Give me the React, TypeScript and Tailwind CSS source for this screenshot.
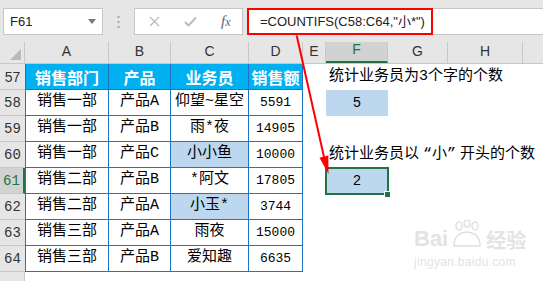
import React from 'react';

// Excel-ish sheet with COUNTIFS example
const tableRows = [
  { n: 58, a: '销售一部', b: '产品A', c: '仰望~星空', d: '5591' },
  { n: 59, a: '销售一部', b: '产品B', c: '雨*夜', d: '14905' },
  { n: 60, a: '销售一部', b: '产品C', c: '小小鱼', d: '10000', hl: true },
  { n: 61, a: '销售二部', b: '产品B', c: '*阿文', d: '17805' },
  { n: 62, a: '销售二部', b: '产品A', c: '小玉*', d: '3744', hl: true },
  { n: 63, a: '销售三部', b: '产品A', c: '雨夜', d: '15000' },
  { n: 64, a: '销售三部', b: '产品B', c: '爱知趣', d: '6635' },
];

const cellFont = "font-['Liberation_Mono','Noto_Sans_CJK_SC',monospace]";

const RowHead = ({ n, active, edge }: { n?: number; active?: boolean; edge?: boolean }) => (
  <div
    className={`w-[25px] h-full flex items-end justify-center pb-[1px] text-[14px] border-b border-[#c8c8c8] ${
      active ? 'bg-[#d2d2d2] text-[#217346] border-r-2 border-r-[#217346]' : 'bg-[#e6e6e6] text-[#333]'
    } ${edge ? 'border-r border-r-[#c8c8c8]' : ''}`}
  >
    {n}
  </div>
);

const Cell = ({
  w,
  first,
  hl,
  children,
  className = '',
}: {
  w: string;
  first?: boolean;
  hl?: boolean;
  children?: React.ReactNode;
  className?: string;
}) => (
  <div
    className={`${w} h-full flex items-center justify-center border-r border-b border-[#1f74c4] ${
      first ? 'border-l' : ''
    } ${hl ? 'bg-[#bdd7ee]' : 'bg-white'} ${className}`}
  >
    {children}
  </div>
);

const ColHead = ({ w, label, active }: { w: string; label: string; active?: boolean }) => (
  <div
    className={`${w} h-full flex items-end justify-center pb-[1px] border-r border-[#c8c8c8] ${
      active ? 'bg-[#d2d2d2] text-[#217346] border-b-2 border-b-[#217346]' : 'text-[#333]'
    }`}
  >
    {label}
  </div>
);

export default function App() {
  return (
    <div className="relative w-[543px] h-[281px] overflow-hidden bg-white font-['Liberation_Sans','Noto_Sans_CJK_SC',sans-serif]">
      {/* formula bar */}
      <div className="h-[42px] bg-[#e6e6e6] flex items-start pt-[8px]">
        <div className="ml-[3px] w-[100px] h-[27px] bg-white border border-[#c6c6c6] flex items-center justify-between pl-[6px] pr-[6px] text-[13px] text-[#222]">
          <span>F61</span>
          <svg width="8" height="5" viewBox="0 0 8 5">
            <polygon points="0,0 8,0 4,5" fill="#777" />
          </svg>
        </div>
        <div className="w-[31px] h-[27px] flex items-center justify-center">
          <svg width="3" height="12" viewBox="0 0 3 12">
            <rect x="0.5" y="0" width="2" height="2" fill="#a8a8a8" />
            <rect x="0.5" y="5" width="2" height="2" fill="#a8a8a8" />
            <rect x="0.5" y="10" width="2" height="2" fill="#a8a8a8" />
          </svg>
        </div>
        <div className="w-[109px] h-[27px] bg-white border border-[#c6c6c6] flex items-center pl-[14px] gap-[24px]">
          <svg width="11" height="11" viewBox="0 0 11 11">
            <path d="M1 1L10 10M10 1L1 10" stroke="#bdbdbd" strokeWidth="1.4" />
          </svg>
          <svg width="13" height="11" viewBox="0 0 13 11">
            <path d="M1 6L4.5 9.5L12 1.5" stroke="#bdbdbd" strokeWidth="2" fill="none" />
          </svg>
          <span className="font-['Liberation_Serif',serif] italic text-[15px] text-[#666] leading-none">
            f<span className="text-[12px]">x</span>
          </span>
        </div>
        <div className="ml-[4px] flex-1 h-[27px] bg-white border-y border-[#c6c6c6] flex">
          <div className="w-[186px] h-[27px] -mt-px border-2 border-[#ff0000] flex items-center pl-[11px] text-[13px] text-[#222] whitespace-nowrap">
            =COUNTIFS(C58:C64,"小*")
          </div>
        </div>
      </div>

      {/* column headers */}
      <div className="h-[22px] flex bg-[#e6e6e6] border-b border-[#c8c8c8] text-[14px]">
        <div className="w-[25px] h-full border-r border-[#c8c8c8] flex items-end justify-end pr-[3px] pb-[3px]">
          <svg width="11" height="11" viewBox="0 0 11 11">
            <polygon points="11,0 11,11 0,11" fill="#b9b9b9" />
          </svg>
        </div>
        <ColHead w="w-[84px]" label="A" />
        <ColHead w="w-[62px]" label="B" />
        <ColHead w="w-[78px]" label="C" />
        <ColHead w="w-[54px]" label="D" />
        <ColHead w="w-[23px]" label="E" />
        <ColHead w="w-[62px]" label="F" active />
        <ColHead w="w-[60px]" label="G" />
        <ColHead w="w-[75px]" label="H" />
        <div className="flex-1" />
      </div>

      {/* header row 57 */}
      <div className="h-[26px] flex">
        <RowHead n={57} />
        {['销售部门', '产品', '业务员', '销售额'].map((t, i) => (
          <div
            key={t}
            className={`${['w-[84px]', 'w-[62px]', 'w-[78px]', 'w-[54px]'][i]} h-full flex items-center justify-center bg-[#00b0f0] text-white font-bold text-[16px] font-['Noto_Sans_CJK_SC',sans-serif] border-r border-b border-[#1f74c4] ${
              i === 0 ? 'border-l' : ''
            }`}
          >
            {t}
          </div>
        ))}
        <div className="w-[23px]" />
        <div className={`pl-[3px] flex items-center whitespace-nowrap text-[15px] text-black ${cellFont}`}>
          统计业务员为3个字的个数
        </div>
      </div>

      {tableRows.map((r) => (
        <div key={r.n} className={`h-[26px] flex text-[15px] text-black ${cellFont}`}>
          <RowHead n={r.n} active={r.n === 61} />
          <Cell w="w-[84px]" first>{r.a}</Cell>
          <Cell w="w-[62px]">{r.b}</Cell>
          <Cell w="w-[78px]" hl={r.hl}>{r.c}</Cell>
          <Cell w="w-[54px]" className="text-[13px]">{r.d}</Cell>
          <div className="w-[23px]" />
          {r.n === 58 && (
            <div className="w-[62px] h-full bg-[#bdd7ee] flex items-center justify-center text-[14px]">5</div>
          )}
          {r.n === 60 && (
            <div className="pl-[3px] flex items-center whitespace-nowrap">
              统计业务员以<span className="px-[4px]">“小”</span>开头的个数
            </div>
          )}
          {r.n === 61 && (
            <div className="relative w-[62px] h-full bg-[#bdd7ee] flex items-center justify-center text-[14px]">
              2
              <div className="absolute -left-px -top-px -right-px -bottom-px border-2 border-[#217346]" />
              <div className="absolute -right-[3px] -bottom-[4px] w-[7px] h-[7px] bg-[#217346] border border-white" />
            </div>
          )}
        </div>
      ))}

      <div className="h-[26px] flex">
        <RowHead edge />
      </div>

      {/* red arrow annotation */}
      <svg className="absolute left-0 top-0 pointer-events-none" width="543" height="281" viewBox="0 0 543 281">
        <line x1="296.7" y1="35.5" x2="324" y2="157" stroke="#ff0000" strokeWidth="2" />
        <polygon points="328.5,174 319.5,157.8 328.3,155.6" fill="#ff0000" />
      </svg>

      {/* watermark */}
      <div className="absolute left-[414px] top-[220px] pointer-events-none select-none text-[#e3e3e3] leading-none">
        <div className="flex items-end gap-[2px]">
          <span className="text-[22px] font-bold">Bai</span>
          <div className="relative w-[34px] h-[30px]">
            <svg width="34" height="30" viewBox="0 0 34 30">
              <ellipse cx="9" cy="6" rx="3" ry="4" fill="none" stroke="#e0e0e0" strokeWidth="1.5" />
              <ellipse cx="17" cy="3.5" rx="3" ry="3.5" fill="none" stroke="#e0e0e0" strokeWidth="1.5" />
              <ellipse cx="25" cy="6" rx="3" ry="4" fill="none" stroke="#e0e0e0" strokeWidth="1.5" />
              <path d="M4 26 Q4 13 17 12 Q30 13 30 26 Z" fill="none" stroke="#e0e0e0" strokeWidth="1.5" />
            </svg>
          </div>
          <span className="text-[20px] font-bold font-['Noto_Sans_CJK_SC',sans-serif]">经验</span>
        </div>
        <div className="mt-[6px] text-[12px] tracking-[0.3px]">jingyan.baidu.com</div>
      </div>
    </div>
  );
}
